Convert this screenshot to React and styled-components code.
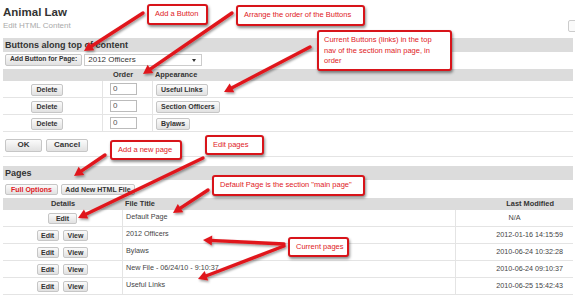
import React from "react";
import styled, { createGlobalStyle } from "styled-components";

const RED = "#e0191e";
const LINE = "#e4e4e4";

const GlobalStyle = createGlobalStyle`
  html, body { margin: 0; padding: 0; background: #fff; overflow: hidden; }
  body { font-family: "Liberation Sans", Arial, sans-serif; color: #333; }
`;

const Page = styled.div`
  position: relative; width: 575px; height: 297px; box-sizing: border-box;
  padding: 5px 2px 0 3px; overflow: hidden;
`;

const Head = styled.div`
  display: flex; justify-content: space-between; align-items: flex-start;
`;
const Title = styled.h1`
  margin: 0; font-size: 11.5px; line-height: 14px; font-weight: 700; color: #333;
`;
const Subtitle = styled.div`
  font-size: 8px; line-height: 10px; color: #aaa; margin-top: 1.5px;
`;
const CornerBox = styled.span`
  width: 14px; height: 12px; margin: 15px -9px 0 0; box-sizing: border-box;
  border: 1px solid #ccc; border-radius: 2px; background: #fafafa;
`;

const SectionBar = styled.div`
  margin-top: ${p => p.$top}px; height: 14px; line-height: 14px; background: #dcdcdc;
  padding-left: 2px; font-size: 9px; font-weight: 700; color: #333;
`;

const Toolbar = styled.div`
  display: flex; align-items: center; gap: ${p => p.$gap || 2}px;
  padding-left: 2px; margin-top: ${p => p.$top}px;
`;

const Btn = styled.button`
  box-sizing: border-box; height: ${p => p.$h || 12}px; padding: 0 ${p => p.$px || 4}px; margin: 0;
  font-family: inherit; font-size: ${p => p.$size || 7}px; font-weight: 700; line-height: 1;
  color: ${p => (p.$danger ? RED : "#333")}; white-space: nowrap;
  background: linear-gradient(#fbfbfb, #e1e1e1); border: 1px solid #c6c6c6; border-radius: 2px;
`;

const SelectBox = styled.div`
  position: relative; box-sizing: border-box; width: 118px; height: 12px;
  border: 1px solid #ccc; background: #fff; font-size: 8px; line-height: 10px;
  padding-left: 3px; color: #333;
  &::after {
    content: ""; position: absolute; right: 5px; top: 4px;
    border-left: 2px solid transparent; border-right: 2px solid transparent; border-top: 3px solid #333;
  }
`;

const Grid = styled.div`
  display: grid; grid-template-columns: ${p => p.$cols}; margin-top: ${p => p.$top || 0}px;
`;
const HeadCell = styled.div`
  background: #dcdcdc; height: 12px; line-height: 12px; font-size: 7.4px; font-weight: 700; color: #333;
  text-align: ${p => p.$align || "left"}; padding: 0 ${p => p.$pr || 2}px 0 ${p => p.$pl || 2}px;
`;
const Cell = styled.div`
  box-sizing: border-box; height: 17px; display: flex; align-items: flex-start; gap: 4px;
  justify-content: ${p => p.$justify || "flex-start"};
  padding: ${p => p.$pad || "3px 2px 0 2px"};
  border-bottom: 1px solid ${LINE}; border-right: ${p => (p.$last ? "none" : `1px solid ${LINE}`)};
  font-size: 7.2px; line-height: 9px; color: #444;
`;
const OrderInput = styled.input`
  box-sizing: border-box; width: 27px; height: 12px; margin: 0; padding: 0 2px;
  border: 1px solid #bbb; font-family: inherit; font-size: 8px; color: #555; background: #fff;
`;

const Divider = styled.div`
  height: 1px; background: ${LINE}; margin-top: ${p => p.$top}px;
`;

const Callout = styled.div`
  position: absolute; left: ${p => p.$x}px; top: ${p => p.$y}px;
  width: ${p => p.$w}px; height: ${p => p.$h}px; box-sizing: border-box;
  border: 2px solid #d8141a; border-radius: 3px; background: #fff;
  box-shadow: 1px 2px 3px rgba(0, 0, 0, 0.45);
  color: ${RED}; font-size: 7.5px; line-height: 10.5px; white-space: nowrap;
  padding: ${p => (p.$multi ? "3px 5px" : "0 6px")};
  display: flex; align-items: ${p => (p.$multi ? "flex-start" : "center")};
`;

const Overlay = styled.svg`
  position: absolute; left: 0; top: 0; width: 575px; height: 297px;
  pointer-events: none; overflow: visible;
`;

function Arrow({ x1, y1, x2, y2 }) {
  const dx = x2 - x1, dy = y2 - y1;
  const len = Math.hypot(dx, dy);
  const ux = dx / len, uy = dy / len;
  const hl = 9, hw = 5;
  const bx = x2 - ux * hl, by = y2 - uy * hl;
  const px = -uy, py = ux;
  const head = `${x2},${y2} ${bx + px * hw},${by + py * hw} ${bx - px * hw},${by - py * hw}`;
  return (
    <g>
      <line x1={x1} y1={y1} x2={bx + ux * 2} y2={by + uy * 2} stroke={RED} strokeWidth="3.4" strokeLinecap="round" />
      <polygon points={head} fill={RED} />
    </g>
  );
}

const arrows = [
  { x1: 143, y1: 13, x2: 84, y2: 51 },
  { x1: 232, y1: 13, x2: 143, y2: 74 },
  { x1: 310, y1: 47, x2: 224, y2: 92 },
  { x1: 105, y1: 155, x2: 74, y2: 176 },
  { x1: 203, y1: 158, x2: 78, y2: 218 },
  { x1: 208, y1: 190, x2: 173, y2: 213 },
  { x1: 284, y1: 244, x2: 203, y2: 240 },
  { x1: 284, y1: 246, x2: 198, y2: 279 },
];

const navButtons = ["Useful Links", "Section Officers", "Bylaws"];

const pages = [
  { title: "Default Page", modified: "N/A", view: false },
  { title: "2012 Officers", modified: "2012-01-16 14:15:59", view: true },
  { title: "Bylaws", modified: "2010-06-24 10:32:28", view: true },
  { title: "New File - 06/24/10 - 9:10:37", modified: "2010-06-24 09:10:37", view: true },
  { title: "Useful Links", modified: "2010-06-25 15:42:43", view: true },
];

export default function App() {
  return (
    <>
      <GlobalStyle />
      <Page>
        <Head>
          <div>
            <Title>Animal Law</Title>
            <Subtitle>Edit HTML Content</Subtitle>
          </div>
          <CornerBox />
        </Head>

        <SectionBar $top={5.5}>Buttons along top of content</SectionBar>
        <Toolbar $top={2}>
          <Btn $size={6.7}>Add Button for Page:</Btn>
          <SelectBox>2012 Officers</SelectBox>
        </Toolbar>

        <Grid $cols="100px 50px 1fr" $top={3}>
          <HeadCell />
          <HeadCell $pl={10}>Order</HeadCell>
          <HeadCell>Appearance</HeadCell>
          {navButtons.map(label => (
            <React.Fragment key={label}>
              <Cell $justify="center" $pad="3px 11px 0 0"><Btn $h={12}>Delete</Btn></Cell>
              <Cell $pad="2px 0 0 7px"><OrderInput readOnly value="0" /></Cell>
              <Cell $last $pad="3px 0 0 3px"><Btn $h={12}>{label}</Btn></Cell>
            </React.Fragment>
          ))}
        </Grid>

        <Toolbar $top={7} $gap={4}>
          <Btn $h={13} $size={8} $px={11.5}>OK</Btn>
          <Btn $h={13} $size={8} $px={7}>Cancel</Btn>
        </Toolbar>
        <Divider $top={4} />

        <SectionBar $top={9}>Pages</SectionBar>
        <Toolbar $top={4} $gap={3}>
          <Btn $h={11} $danger $px={5}>Full Options</Btn>
          <Btn $h={11} $px={3.5}>Add New HTML File</Btn>
        </Toolbar>

        <Grid $cols="120px 333px 1fr" $top={3}>
          <HeadCell $align="center">Details</HeadCell>
          <HeadCell>File Title</HeadCell>
          <HeadCell $align="right" $pr={19}>Last Modified</HeadCell>
          {pages.map(p => (
            <React.Fragment key={p.title}>
              <Cell $justify="center" $pad="3px 0 0 0">
                <Btn $h={11} $px={p.view ? 3.4 : 6.4}>Edit</Btn>
                {p.view && <Btn $h={11} $px={4}>View</Btn>}
              </Cell>
              <Cell $pad="2px 3px 0 3px">{p.title}</Cell>
              <Cell $last $justify={p.view ? "flex-end" : "center"} $pad={p.view ? "3px 10px 0 0" : "3px 0 0 0"}>
                {p.modified}
              </Cell>
            </React.Fragment>
          ))}
        </Grid>

        <Overlay viewBox="0 0 575 297">
          <defs>
            <filter id="shadow" x="-20%" y="-20%" width="140%" height="140%">
              <feDropShadow dx="1.2" dy="1.6" stdDeviation="1" floodColor="#000" floodOpacity="0.4" />
            </filter>
          </defs>
          <g filter="url(#shadow)">
            {arrows.map((a, i) => <Arrow key={i} {...a} />)}
          </g>
        </Overlay>

        <Callout $x={147} $y={4} $w={61} $h={21}>Add a Button</Callout>
        <Callout $x={236} $y={5} $w={129} $h={21}>Arrange the order of the Buttons</Callout>
        <Callout $x={317} $y={30} $w={135} $h={41} $multi>
          <span>Current Buttons (links) in the top<br />nav of the section main page, in<br />order</span>
        </Callout>
        <Callout $x={110} $y={140} $w={72} $h={20}>Add a new page</Callout>
        <Callout $x={205} $y={135} $w={59} $h={20}>Edit pages</Callout>
        <Callout $x={212} $y={175} $w={153} $h={21}>Default Page is the section "main page"</Callout>
        <Callout $x={288} $y={237} $w={61} $h={20}>Current pages</Callout>
      </Page>
    </>
  );
}
